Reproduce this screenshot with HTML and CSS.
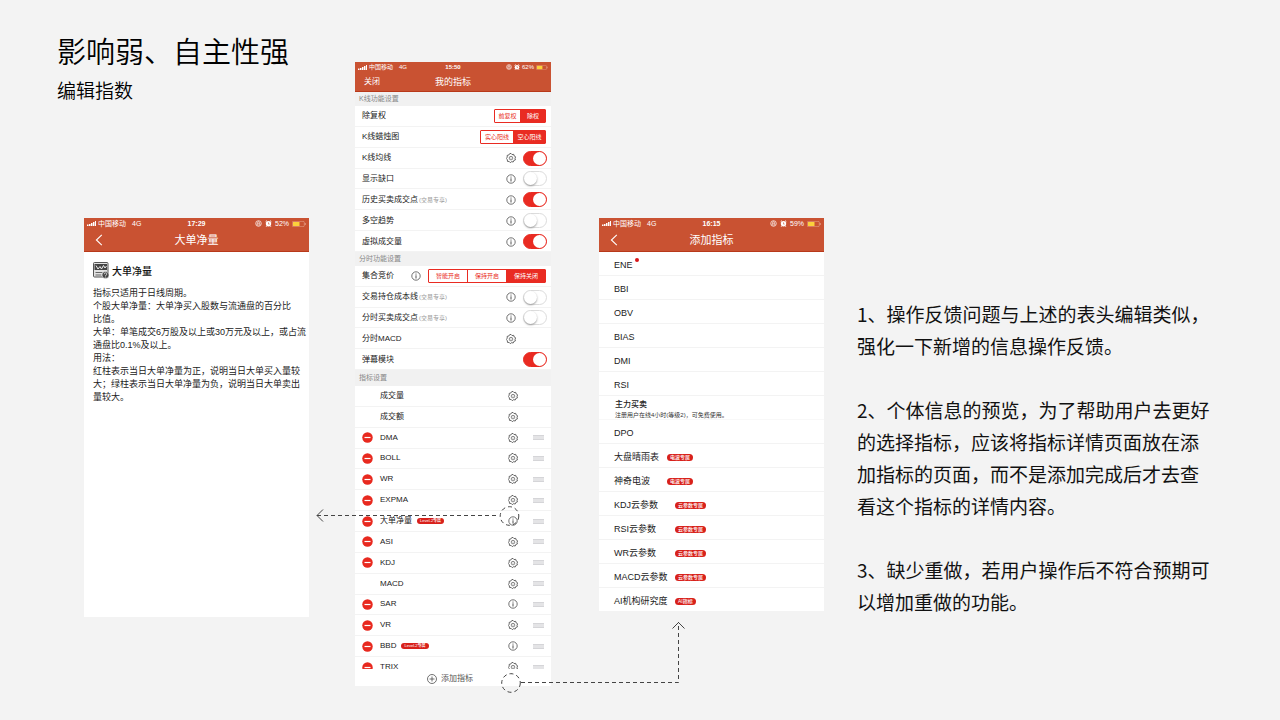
FILE: index.html
```html
<!DOCTYPE html>
<html lang="zh-CN">
<head>
<meta charset="utf-8">
<meta name="viewport" content="width=device-width, initial-scale=1">
<title>编辑指数</title>
<link rel="stylesheet" href="styles.css">
</head>
<body>
<svg class="defs" aria-hidden="true">
  <symbol id="gear" viewBox="0 0 20 20"><path d="M10 .8 12 3.200 15.400 2.700 16.400 6 19.400 7.600 18 10.400 18.900 13.700 15.700 14.900 14.400 18 11.200 17.400 8.600 19.400 6.400 16.900 3 16.800 2.700 13.500.6 10.900 2.500 8.300 2.300 4.800 5.500 4.100 7.300 1.400Z" fill="none" stroke="#444" stroke-width="1.600" stroke-linejoin="round"/><circle cx="10" cy="10.200" r="3.600" fill="none" stroke="#555" stroke-width="1.400"/><circle cx="10" cy="10.200" r="1" fill="#777"/></symbol>
  <symbol id="info" viewBox="0 0 20 20"><circle cx="10" cy="10" r="8.400" fill="none" stroke="#444" stroke-width="1.500"/><circle cx="10" cy="5.900" r="1.100" fill="#333"/><path d="M10 8.600V15" stroke="#333" stroke-width="1.700"/></symbol>
  <symbol id="minus" viewBox="0 0 22 22"><circle cx="11" cy="11" r="10.500" fill="#e8291f"/><path d="M5 11h12" stroke="#fff" stroke-width="2.400"/></symbol>
  <symbol id="back" viewBox="0 0 8 12"><path d="M6.800.8 1.400 6l5.400 5.200" fill="none" stroke="#fff" stroke-width="1.100"/></symbol>
  <symbol id="signal" viewBox="0 0 18 10"><path d="M0 7h3v3H0zM4 6h3v4H4zM8 4h3v6H8zM12 2h3v8h-3zM16 0h2v10h-2z" fill="#fff"/></symbol>
  <symbol id="lock" viewBox="0 0 12 12"><circle cx="6" cy="6" r="4.800" fill="none" stroke="#fff" stroke-width="1.200"/><path d="M3.600 5.600h4.800v3H3.600zM4.500 5.600V4.200a1.500 1.500 0 0 1 3 0v1.400" fill="none" stroke="#fff"/></symbol>
  <symbol id="alarm" viewBox="0 0 12 12"><circle cx="6" cy="6.400" r="4.600" fill="#fff"/><path d="m1 3 2.400-2M11 3 8.600 1M3 10l-1 1.600M9 10l1 1.600" stroke="#fff" stroke-width="1.500"/><path d="M6 4v3h2" fill="none" stroke="#c95232"/></symbol>
  <symbol id="battery" viewBox="0 0 28 12"><rect x=".6" y=".6" width="24" height="10.800" rx="2.400" fill="none" stroke="#e9a993" stroke-width="1.200"/><rect x="2" y="2" width="13" height="8" fill="#fbd03c"/><path d="M26.500 4v4" stroke="#e9a993" stroke-width="1.600"/></symbol>
</svg>

<main class="slide">
  <section class="intro">
    <header class="heading">
      <h1>影响弱、自主性强</h1>
      <h2>编辑指数</h2>
    </header>
    <article class="phone phone-detail">
      <header class="top">
        <div class="status"><span class="carrier"><svg class="signal"><use href="#signal"/></svg>中国移动<span class="net">4G</span></span><b>17:29</b><span class="power"><svg class="dot"><use href="#lock"/></svg><svg class="dot"><use href="#alarm"/></svg>52%<svg class="battery"><use href="#battery"/></svg></span></div>
        <div class="nav"><button class="back" aria-label="返回"><svg><use href="#back"/></svg></button><h3>大单净量</h3></div>
      </header>
      <div class="detail">
        <h4><svg class="doc" viewBox="0 0 32 34" aria-hidden="true"><rect x="1" y="1" width="29" height="29" rx="2" fill="#e2e2e2" stroke="#555" stroke-width="2"/><path d="M3 4h25v12H3z" fill="#444"/><path d="m6 7 4 7 4-5 3 5 4-7 3 5 3-4" fill="none" stroke="#eee" stroke-width="2"/><path d="M5 21h14M5 26h12" stroke="#666" stroke-width="2"/><circle cx="25" cy="26" r="7" fill="#444" stroke="#fff"/><path d="M22.500 24.500c0-4 5.500-3.500 5 0-.4 1.500-2.500 1.500-2.500 3.500m0 1v2" fill="none" stroke="#fff" stroke-width="1.500"/></svg>大单净量</h4>
        <p>指标只适用于日线周期。<br>个股大单净量：大单净买入股数与流通盘的百分比<br>比值。<br>大单：单笔成交6万股及以上或30万元及以上，或占流<br>通盘比0.1%及以上。<br>用法：<br>红柱表示当日大单净量为正，说明当日大单买入量较<br>大；绿柱表示当日大单净量为负，说明当日大单卖出<br>量较大。</p>
      </div>
    </article>
  </section>

  <article class="phone phone-mine">
    <header class="top compact">
      <div class="status"><span class="carrier"><svg class="signal"><use href="#signal"/></svg>中国移动<span class="net">4G</span></span><b>15:50</b><span class="power"><svg class="dot"><use href="#lock"/></svg><svg class="dot"><use href="#alarm"/></svg>62%<svg class="battery"><use href="#battery"/></svg></span></div>
      <div class="nav"><button class="back">关闭</button><h3>我的指标</h3></div>
    </header>
    <h4 class="group">K线功能设置</h4>
    <ul class="settings seven">
      <li><span>除复权</span><div class="seg two"><button>前复权</button><button class="on">除权</button></div></li>
      <li><span>K线蜡烛图</span><div class="seg two wide"><button>实心阳线</button><button class="on">空心阳线</button></div></li>
      <li><label for="t1">K线均线</label><button class="icon" aria-label="设置"><svg><use href="#gear"/></svg></button><input id="t1" class="toggle" type="checkbox" checked></li>
      <li><label for="t2">显示缺口</label><button class="icon" aria-label="说明"><svg><use href="#info"/></svg></button><input id="t2" class="toggle" type="checkbox"></li>
      <li><label for="t3">历史买卖成交点<small>(交易专享)</small></label><button class="icon" aria-label="说明"><svg><use href="#info"/></svg></button><input id="t3" class="toggle" type="checkbox" checked></li>
      <li><label for="t4">多空趋势</label><button class="icon" aria-label="说明"><svg><use href="#info"/></svg></button><input id="t4" class="toggle" type="checkbox"></li>
      <li><label for="t5">虚拟成交量</label><button class="icon" aria-label="说明"><svg><use href="#info"/></svg></button><input id="t5" class="toggle" type="checkbox" checked></li>
    </ul>
    <h4 class="group">分时功能设置</h4>
    <ul class="settings five">
      <li class="auction"><span>集合竞价</span><button class="icon" aria-label="说明"><svg><use href="#info"/></svg></button><div class="seg three"><button>智能开启</button><button>保持开启</button><button class="on">保持关闭</button></div></li>
      <li><label for="t6">交易持仓成本线<small>(交易专享)</small></label><button class="icon" aria-label="说明"><svg><use href="#info"/></svg></button><input id="t6" class="toggle" type="checkbox"></li>
      <li><label for="t7">分时买卖成交点<small>(交易专享)</small></label><button class="icon" aria-label="说明"><svg><use href="#info"/></svg></button><input id="t7" class="toggle" type="checkbox"></li>
      <li><span>分时MACD</span><button class="icon" aria-label="设置"><svg><use href="#gear"/></svg></button></li>
      <li><label for="t8">弹幕模块</label><input id="t8" class="toggle" type="checkbox" checked></li>
    </ul>
    <h4 class="group tall">指标设置</h4>
    <div class="clip">
      <ul class="indices">
        <li><span class="name">成交量</span><button class="icon" aria-label="设置"><svg><use href="#gear"/></svg></button></li>
        <li><span class="name">成交额</span><button class="icon" aria-label="设置"><svg><use href="#gear"/></svg></button></li>
        <li><button class="del" aria-label="删除"><svg><use href="#minus"/></svg></button><span class="name">DMA</span><button class="icon" aria-label="设置"><svg><use href="#gear"/></svg></button><i class="grip"></i></li>
        <li><button class="del" aria-label="删除"><svg><use href="#minus"/></svg></button><span class="name">BOLL</span><button class="icon" aria-label="设置"><svg><use href="#gear"/></svg></button><i class="grip"></i></li>
        <li><button class="del" aria-label="删除"><svg><use href="#minus"/></svg></button><span class="name">WR</span><button class="icon" aria-label="设置"><svg><use href="#gear"/></svg></button><i class="grip"></i></li>
        <li><button class="del" aria-label="删除"><svg><use href="#minus"/></svg></button><span class="name">EXPMA</span><button class="icon" aria-label="设置"><svg><use href="#gear"/></svg></button><i class="grip"></i></li>
        <li><button class="del" aria-label="删除"><svg><use href="#minus"/></svg></button><span class="name">大单净量<em class="tag">Level-2专属</em></span><button class="icon" aria-label="说明"><svg><use href="#info"/></svg></button><i class="grip"></i></li>
        <li><button class="del" aria-label="删除"><svg><use href="#minus"/></svg></button><span class="name">ASI</span><button class="icon" aria-label="设置"><svg><use href="#gear"/></svg></button><i class="grip"></i></li>
        <li><button class="del" aria-label="删除"><svg><use href="#minus"/></svg></button><span class="name">KDJ</span><button class="icon" aria-label="设置"><svg><use href="#gear"/></svg></button><i class="grip"></i></li>
        <li><span class="name">MACD</span><button class="icon" aria-label="设置"><svg><use href="#gear"/></svg></button><i class="grip"></i></li>
        <li><button class="del" aria-label="删除"><svg><use href="#minus"/></svg></button><span class="name">SAR</span><button class="icon" aria-label="说明"><svg><use href="#info"/></svg></button><i class="grip"></i></li>
        <li><button class="del" aria-label="删除"><svg><use href="#minus"/></svg></button><span class="name">VR</span><button class="icon" aria-label="设置"><svg><use href="#gear"/></svg></button><i class="grip"></i></li>
        <li><button class="del" aria-label="删除"><svg><use href="#minus"/></svg></button><span class="name">BBD<em class="tag">Level-2专属</em></span><button class="icon" aria-label="说明"><svg><use href="#info"/></svg></button><i class="grip"></i></li>
        <li><button class="del" aria-label="删除"><svg><use href="#minus"/></svg></button><span class="name">TRIX</span><button class="icon" aria-label="设置"><svg><use href="#gear"/></svg></button><i class="grip"></i></li>
      </ul>
    </div>
    <button class="add"><svg viewBox="0 0 20 20"><circle cx="10" cy="10" r="9" fill="none" stroke="#444" stroke-width="1.500"/><path d="M10 5v10M5 10h10" stroke="#444" stroke-width="1.500"/></svg>添加指标</button>
    <svg class="link-detail" viewBox="0 0 205 22" aria-hidden="true"><path d="m8 4.500-6 6 6 6" class="ink"/><path d="M2 10.500h181" class="ink dash"/><circle cx="194.500" cy="11" r="9.300" class="ink dash"/></svg>
    <svg class="link-add" viewBox="0 0 190 75" aria-hidden="true"><circle cx="11" cy="63" r="9.300" class="ink dash"/><path d="M21 62.500h157.500V2" class="ink dash"/><path d="m172.500 8.500 6-6 6 6" class="ink"/></svg>
  </article>

  <article class="phone phone-add">
    <header class="top">
      <div class="status"><span class="carrier"><svg class="signal"><use href="#signal"/></svg>中国移动<span class="net">4G</span></span><b>16:15</b><span class="power"><svg class="dot"><use href="#lock"/></svg><svg class="dot"><use href="#alarm"/></svg>59%<svg class="battery"><use href="#battery"/></svg></span></div>
      <div class="nav"><button class="back" aria-label="返回"><svg><use href="#back"/></svg></button><h3>添加指标</h3></div>
    </header>
    <ul class="choices">
      <li>ENE<i class="new"></i></li>
      <li>BBI</li>
      <li>OBV</li>
      <li>BIAS</li>
      <li>DMI</li>
      <li>RSI</li>
      <li class="double"><strong>主力买卖</strong><small>注册用户在线4小时(等级2)，可免费使用。</small></li>
      <li>DPO</li>
      <li><span class="wave">大盘晴雨表</span><em class="tag">电波专属</em></li>
      <li><span class="wave">神奇电波</span><em class="tag">电波专属</em></li>
      <li><span class="cloud">KDJ云参数</span><em class="tag">云参数专属</em></li>
      <li><span class="cloud">RSI云参数</span><em class="tag">云参数专属</em></li>
      <li><span class="cloud">WR云参数</span><em class="tag">云参数专属</em></li>
      <li><span class="cloud">MACD云参数</span><em class="tag">云参数专属</em></li>
      <li><span class="cloud">AI机构研究度</span><em class="tag">AI指标</em></li>
    </ul>
  </article>

  <section class="notes">
    <p>1、操作反馈问题与上述的表头编辑类似，强化一下新增的信息操作反馈。</p>
    <p>2、个体信息的预览，为了帮助用户去更好的选择指标，应该将指标详情页面放在添加指标的页面，而不是添加完成后才去查看这个指标的详情内容。</p>
    <p>3、缺少重做，若用户操作后不符合预期可以增加重做的功能。</p>
  </section>
</main>
</body>
</html>
```
FILE: styles.css
```css
* { box-sizing: border-box; }
body {
  margin: 0;
  background: #f3f3f3;
  color: #111;
  font-family: "Liberation Sans", "Noto Sans CJK SC", sans-serif;
}
h1, h2, h3, h4, p, ul { margin: 0; padding: 0; font-weight: 400; }
ul { list-style: none; }
button { border: 0; padding: 0; margin: 0; background: none; color: inherit; font: inherit; white-space: nowrap; }
svg { display: block; flex: none; }
em, i { font-style: normal; }
.defs { position: absolute; width: 0; height: 0; }

.slide { display: flex; align-items: flex-start; min-height: 100vh; padding: 0 65px 0 57px; }

/* Heading and detail screen */
.intro { flex: 252 1 0; min-width: 0; padding-top: 30px; }
.heading { height: 188px; font-family: "Noto Sans CJK SC", sans-serif; color: #000; white-space: nowrap; }
.heading h1 { font-size: 29px; line-height: 40px; font-weight: 350; }
.heading h2 { font-size: 19px; line-height: 28px; margin-top: 6px; font-weight: 350; }

/* Phone screens */
.phone { background: #fff; }
.phone-detail { margin-left: 27px; min-height: 399px; }
.phone-mine { position: relative; flex: 196 1 0; min-width: 0; margin: 62px 0 0 46px; }
.phone-add { flex: 225 1 0; min-width: 0; margin: 218px 0 0 48px; }

.top { background: #c95232; color: #fff; border-bottom: 1px solid #b8391a; }
.status { display: grid; grid-template-columns: 1fr auto 1fr; align-items: center; padding: 0 3px; height: 11px; font-size: 7px; line-height: 10px; white-space: nowrap; }
.carrier, .power { display: flex; align-items: center; gap: 2px; }
.net { margin-left: 4px; }
.power { justify-content: flex-end; gap: 3px; }
.signal { width: 9px; height: 5px; }
.dot { width: 7px; height: 7px; }
.battery { width: 14px; height: 6px; }
.nav { display: grid; grid-template-columns: 1fr auto 1fr; align-items: center; height: 22px; padding: 0 11px; }
.nav h3 { font-size: 11px; line-height: 16px; }
.back { justify-self: start; }
.back svg { width: 8px; height: 12px; }
.compact .status { font-size: 6px; height: 10px; }
.compact .power { gap: 2px; }
.compact .dot { width: 6px; height: 6px; }
.compact .battery { width: 12px; height: 5px; }
.compact .nav { height: 19px; padding: 0 9px; font-size: 8px; line-height: 12px; }
.compact .nav h3 { font-size: 9px; line-height: 12px; }

.detail { padding: 10px 0 0 9px; white-space: nowrap; }
.detail h4 { display: flex; align-items: center; gap: 3px; font-size: 10px; line-height: 20px; font-weight: 500; }
.doc { width: 16px; height: 17px; margin-bottom: 3px; }
.detail p { margin-top: 5px; font-size: 9px; line-height: 13px; color: #222; }

/* Settings */
.group { height: 14px; padding-left: 4px; background: #f1f1f1; color: #888; font-size: 7px; line-height: 14px; }
.group.tall { height: 16px; line-height: 16px; }
.settings { display: grid; grid-auto-rows: 1fr; font-size: 8px; line-height: 12px; color: #222; white-space: nowrap; }
.seven { min-height: 146px; }
.five { min-height: 104px; }
.settings li { display: grid; grid-template-columns: 1fr 10px 24px; column-gap: 7px; align-items: center; padding: 1px 4px 0 7px; }
li { border-bottom: 1px solid #f3f3f3; }
small { font-size: 6px; color: #999; }
.settings small { margin-left: 1px; }
.icon { grid-column: 2; width: 10px; height: 10px; }
.icon svg { width: 10px; height: 10px; }
.toggle { grid-column: 3; appearance: none; position: relative; width: 24px; height: 15px; margin: 0; border: 1px solid #dcdcdc; border-radius: 8px; background: #fff; }
.toggle::after { content: ""; position: absolute; left: 0; top: 0; width: 13px; height: 13px; border-radius: 50%; background: #fff; box-shadow: 0 1px 2px #999; }
.toggle:checked { background: #e92b22; border-color: #e92b22; }
.toggle:checked::after { left: 9px; box-shadow: none; }
.seg { display: grid; justify-self: end; height: 14px; margin-right: 1px; border: 1px solid #e92b22; border-radius: 1px; color: #e92b22; font-size: 6px; line-height: 12px; }
.seg.two { grid-template-columns: 25px 25px; }
.seg.wide { grid-template-columns: 32px 32px; }
.seg.three { grid-template-columns: 38px 39px 39px; }
.seg button + button { border-left: 1px solid #e92b22; }
.seg .on { background: #e92b22; color: #fff; }
.settings li:has(.two) { grid-template-columns: 1fr auto; }
.settings .auction { grid-template-columns: 1fr 10px auto; }

.clip { height: 283px; overflow: hidden; }
.indices { display: grid; grid-auto-rows: 1fr; min-height: 292px; font-size: 8px; line-height: 12px; color: #222; white-space: nowrap; }
.indices li { display: grid; grid-template-columns: 11px 1fr 10px 11px; column-gap: 7px; align-items: center; padding: 0 7px; }
.indices .name { grid-column: 2; }
.indices .icon { grid-column: 3; justify-self: end; margin-right: 8px; }
.del svg { width: 11px; height: 11px; }
.name { display: flex; align-items: center; gap: 5px; }
.grip { grid-column: 4; height: 5px; background: #e4e4e6; border-top: 1px solid #d5d5d8; border-bottom: 1px solid #d5d5d8; }
.tag { display: inline-block; padding: 0 3px; border-radius: 4px; background: #d8211b; color: #fff; font-size: 5px; line-height: 7px; font-weight: 500; }
.indices .tag { font-size: 4px; line-height: 6px; }
.add { display: flex; align-items: center; justify-content: center; gap: 4px; width: 100%; height: 17px; padding: 3px 6px 0 0; font-size: 8px; line-height: 12px; color: #555; }
.add svg { width: 10px; height: 10px; }

/* Connectors drawn over the screens */
.link-detail { position: absolute; left: -40px; top: 443px; width: 205px; height: 22px; }
.link-add { position: absolute; left: 145px; top: 558px; width: 190px; height: 75px; }
.ink { fill: none; stroke: #444; stroke-width: 1; }
.dash { stroke-dasharray: 4 3; }

/* Choices */
.choices { display: grid; grid-auto-rows: 1fr; min-height: 360px; font-size: 9px; line-height: 14px; color: #222; white-space: nowrap; }
.choices li { display: flex; align-items: center; gap: 6px; padding: 3px 0 0 15px; }
.new { width: 4px; height: 4px; margin: 0 0 10px -4px; border-radius: 50%; background: #d8171b; }
.choices .double { flex-direction: column; align-items: flex-start; justify-content: flex-end; gap: 1px; padding: 0 0 0 16px; border-bottom-color: #f8f8f8; }
.double strong { font-size: 8px; line-height: 11px; font-weight: 500; }
.double small { line-height: 8px; color: #333; }
.wave { min-width: 47px; }
.cloud { min-width: 55px; }

/* Notes */
.notes { flex: 358 1 0; min-width: 0; margin: 298px 0 0 33px; font-family: "Noto Sans CJK SC", sans-serif; font-size: 19px; line-height: 32px; font-weight: 350; color: #111; }
.notes p + p { margin-top: 32px; }
```
